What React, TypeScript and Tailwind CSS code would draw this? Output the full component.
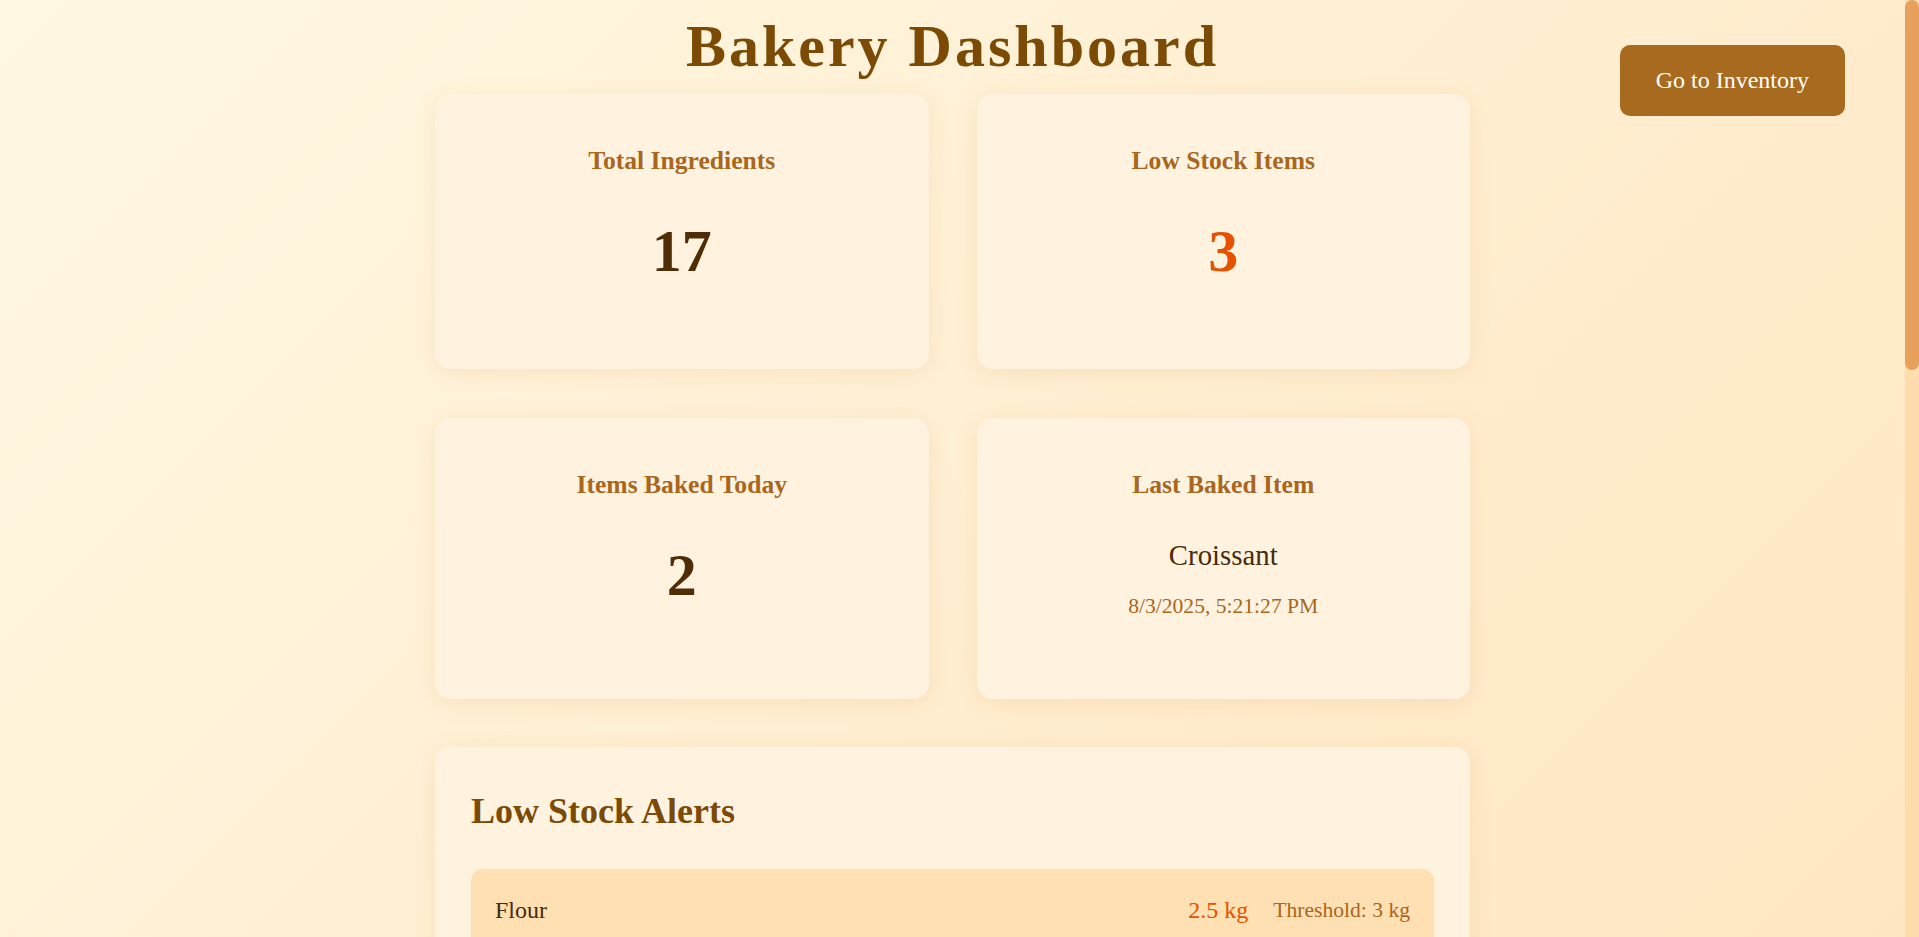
import React from 'react';

const stats = [
  { label: 'Total Ingredients', value: '17', tone: 'text-[#4e2d07]' },
  { label: 'Low Stock Items', value: '3', tone: 'text-[#e65100]' },
  { label: 'Items Baked Today', value: '2', tone: 'text-[#4e2d07]' },
];

const lowStock = [
  { name: 'Flour', qty: '2.5 kg', threshold: '3 kg' },
  { name: 'Butter', qty: '0.8 kg', threshold: '1 kg' },
  { name: 'Yeast', qty: '0.2 kg', threshold: '0.5 kg' },
];

const recentBakes = [
  { name: 'Croissant', when: '8/3/2025, 5:21:27 PM' },
  { name: 'Sourdough Bread', when: '8/3/2025, 9:02:11 AM' },
  { name: 'Blueberry Muffin', when: '8/2/2025, 4:40:05 PM' },
  { name: 'Baguette', when: '8/2/2025, 7:15:48 AM' },
  { name: 'Cinnamon Roll', when: '8/1/2025, 3:12:30 PM' },
  { name: 'Croissant', when: '8/1/2025, 8:05:19 AM' },
  { name: 'Banana Bread', when: '7/31/2025, 2:44:02 PM' },
  { name: 'Sourdough Bread', when: '7/31/2025, 6:58:40 AM' },
  { name: 'Chocolate Chip Cookie', when: '7/30/2025, 1:20:13 PM' },
];

const cardClass =
  'rounded-2xl bg-[#fff3e0] px-8 pt-[52px] pb-[79px] text-center shadow-[0_4px_22px_rgba(190,120,30,0.12)]';

function StatCard({ label, value, tone }: { label: string; value: string; tone: string }) {
  return (
    <div className={cardClass}>
      <h3 className="text-[25.6px] font-bold text-[#a8661e]">{label}</h3>
      <p className={`mt-[41px] mb-[4px] text-[60px] font-bold ${tone}`}>{value}</p>
    </div>
  );
}

export default function App() {
  return (
    <div className="flex h-screen bg-[linear-gradient(135deg,#fff8e3,#ffe6c2)] font-['Liberation_Serif',serif] leading-[normal]">
      <div className="relative h-full flex-1 overflow-hidden">
        <button className="absolute top-[45px] right-[60px] rounded-[10px] bg-[#a86a1e] px-[36px] py-[22px] text-[24px] text-white">
          Go to Inventory
        </button>

        <h1 className="pt-[12px] text-center text-[60px] font-bold tracking-[3px] text-[#7b4a04]">
          Bakery Dashboard
        </h1>

        <div className="mx-auto mt-[13px] w-[1035px] pb-[96px]">
          <div className="grid grid-cols-2 gap-x-[48px] gap-y-[49px]">
            {stats.slice(0, 2).map((s) => (
              <StatCard key={s.label} {...s} />
            ))}
            <StatCard {...stats[2]} />
            <div className="rounded-2xl bg-[#fff3e0] px-8 pt-[52px] pb-[80px] text-center shadow-[0_4px_22px_rgba(190,120,30,0.12)]">
              <h3 className="text-[25.6px] font-bold text-[#a8661e]">Last Baked Item</h3>
              <p className="mt-[39px] text-[28.8px] text-[#4a2a08]">Croissant</p>
              <p className="mt-[22px] text-[21.6px] text-[#a8661e]">8/3/2025, 5:21:27 PM</p>
            </div>
          </div>

          <section className="mt-[48px] rounded-2xl bg-[#fff3e0] px-[36px] pt-[43px] pb-[36px] shadow-[0_4px_22px_rgba(190,120,30,0.12)]">
            <h2 className="text-[36px] font-bold text-[#7b4a04]">Low Stock Alerts</h2>
            <div className="mt-[37px] flex flex-col gap-4">
              {lowStock.map((item) => (
                <div
                  key={item.name}
                  className="flex items-center justify-between rounded-xl bg-[#ffe0b2] px-6 py-[28px]"
                >
                  <span className="text-[24px] text-[#4a2a08]">{item.name}</span>
                  <div className="flex items-center gap-[25px]">
                    <span className="text-[24px] text-[#e65100]">{item.qty}</span>
                    <span className="text-[21.6px] text-[#a8661e]">Threshold: {item.threshold}</span>
                  </div>
                </div>
              ))}
            </div>
          </section>

          <section className="mt-[48px] rounded-2xl bg-[#fff3e0] px-[36px] pt-[43px] pb-[36px] shadow-[0_4px_22px_rgba(190,120,30,0.12)]">
            <h2 className="text-[36px] font-bold text-[#7b4a04]">Recent Bakes</h2>
            <div className="mt-[36px] flex flex-col gap-4">
              {recentBakes.map((b, i) => (
                <div
                  key={i}
                  className="flex items-center justify-between rounded-xl bg-[#ffe9c9] px-6 py-[28px]"
                >
                  <span className="text-[24px] text-[#4a2a08]">{b.name}</span>
                  <span className="text-[21.6px] text-[#a8661e]">{b.when}</span>
                </div>
              ))}
            </div>
          </section>
        </div>
      </div>

      {/* page scrollbar */}
      <div className="h-full w-[14px] shrink-0 bg-[#fedcab]">
        <div className="h-[370px] w-full rounded-full bg-[#e6a15d]" />
      </div>
    </div>
  );
}
